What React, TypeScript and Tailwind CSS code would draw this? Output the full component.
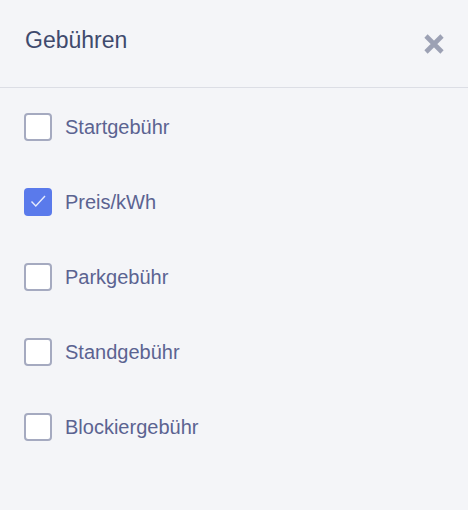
import React, { useState } from "react";

const FEES = [
  "Startgebühr",
  "Preis/kWh",
  "Parkgebühr",
  "Standgebühr",
  "Blockiergebühr",
];

export default function App() {
  const [checked, setChecked] = useState<Record<string, boolean>>({
    "Preis/kWh": true,
  });

  const toggle = (name: string) =>
    setChecked((c) => ({ ...c, [name]: !c[name] }));

  return (
    <div
      className="w-[468px] h-[510px] bg-[#f4f5f8]"
      style={{ fontFamily: '"Liberation Sans", Arial, sans-serif' }}
    >
      <div className="h-[88px] flex items-center justify-between pl-[25px] pr-[23px] border-b border-[#dcdee5]">
        <h2 className="text-[23px] text-[#3f4a6d] leading-none -mt-[6px]">
          Gebühren
        </h2>
        <button className="w-[22px] h-[22px] flex items-center justify-center text-[#9ca1b4]">
          <svg width="22" height="22" viewBox="0 0 22 22">
            <path
              d="M3 3 L19 19 M19 3 L3 19"
              stroke="currentColor"
              strokeWidth="4.6"
              strokeLinecap="butt"
            />
          </svg>
        </button>
      </div>

      <div className="pt-[1px]">
        {FEES.map((name) => {
          const on = !!checked[name];
          return (
            <label
              key={name}
              className="h-[75px] flex items-center pl-[24px] gap-[13px] cursor-pointer"
            >
              <span
                onClick={() => toggle(name)}
                className={
                  on
                    ? "w-[28px] h-[28px] rounded-[4px] bg-[#5a7aeb]"
                    : "w-[28px] h-[28px] rounded-[4px] bg-white border-[2.5px] border-[#a5aac0]"
                }
              >
                {on && (
                  <svg width="28" height="28" viewBox="0 0 28 28">
                    <path
                      d="M7.5 13.5 L11.8 18 L21 8"
                      fill="none"
                      stroke="white"
                      strokeWidth="1.4"
                      strokeOpacity="0.85"
                    />
                  </svg>
                )}
              </span>
              <span className="text-[20px] text-[#5b6391]">{name}</span>
            </label>
          );
        })}
      </div>
    </div>
  );
}
